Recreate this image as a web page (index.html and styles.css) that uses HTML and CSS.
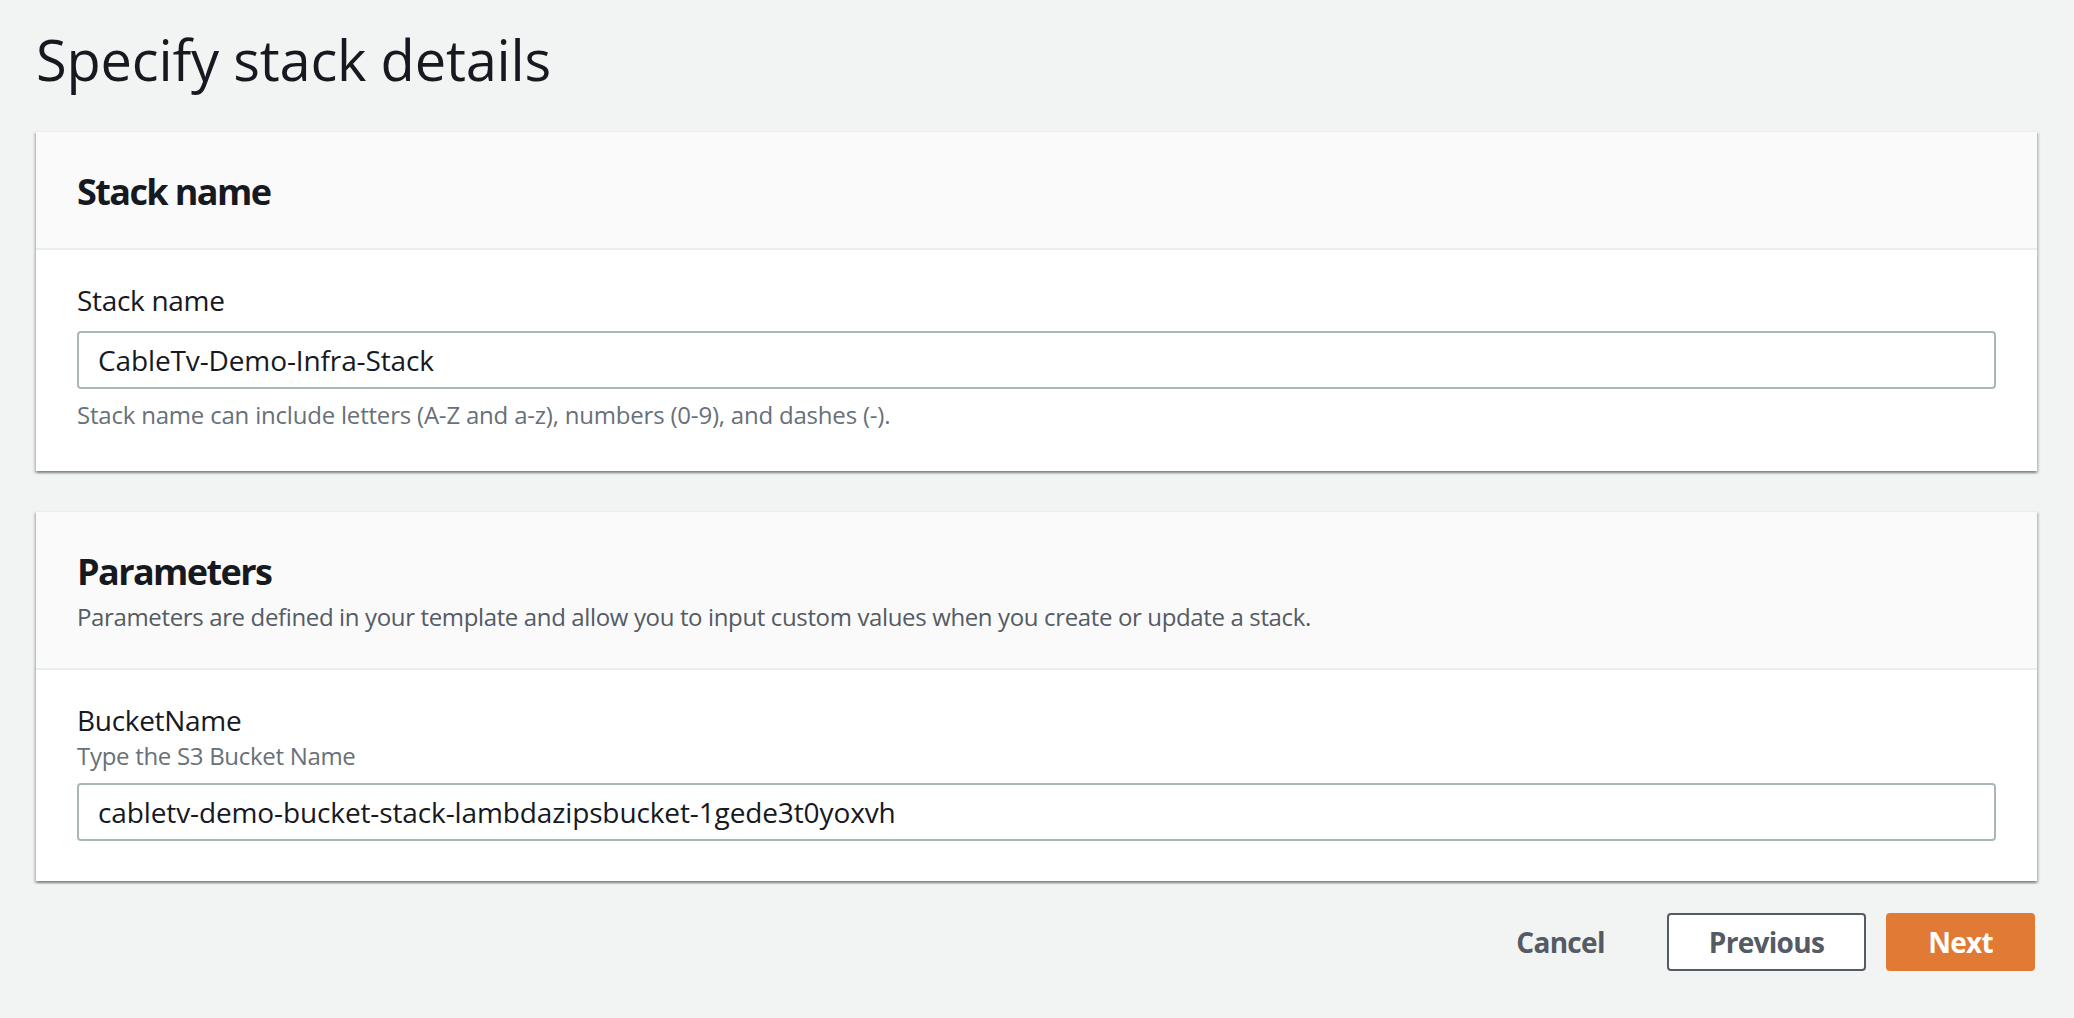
FILE: index.html
```html
<!DOCTYPE html>
<html lang="en">
<head>
<meta charset="utf-8">
<title>Specify stack details</title>
<link rel="stylesheet" href="styles.css">
</head>
<body>
<main class="page">
  <h1 class="page-title">Specify stack details</h1>

  <section class="card">
    <header class="card-header">
      <h2 class="card-title">Stack name</h2>
    </header>
    <div class="card-body">
      <div class="field">
        <label class="field-label" for="stack-name">Stack name</label>
        <input class="field-input" id="stack-name" type="text" value="CableTv-Demo-Infra-Stack">
        <p class="field-hint">Stack name can include letters (A-Z and a-z), numbers (0-9), and dashes (-).</p>
      </div>
    </div>
  </section>

  <section class="card">
    <header class="card-header">
      <h2 class="card-title">Parameters</h2>
      <p class="card-desc">Parameters are defined in your template and allow you to input custom values when you create or update a stack.</p>
    </header>
    <div class="card-body">
      <div class="field">
        <label class="field-label" for="bucket-name">BucketName</label>
        <p class="field-desc">Type the S3 Bucket Name</p>
        <input class="field-input field-input-after-desc" id="bucket-name" type="text" value="cabletv-demo-bucket-stack-lambdazipsbucket-1gede3t0yoxvh">
      </div>
    </div>
  </section>

  <div class="actions">
    <button class="btn btn-link" type="button">Cancel</button>
    <button class="btn btn-normal" type="button">Previous</button>
    <button class="btn btn-primary" type="button">Next</button>
  </div>
</main>
</body>
</html>
```

FILE: styles.css
```css
* {
  box-sizing: border-box;
}

html, body {
  margin: 0;
  padding: 0;
  background: #f2f3f3;
}

body {
  font-family: "Open Sans", "Noto Sans", "Liberation Sans", sans-serif;
  color: #16191f;
  -webkit-font-smoothing: antialiased;
}

.page {
  padding: 23px 37px 0 36px;
}

.page-title {
  margin: 0 0 36px;
  font-size: 56px;
  line-height: 72px;
  font-weight: 400;
  letter-spacing: -0.2px;
  color: #16191f;
}

.card {
  background: #ffffff;
  border-top: 1px solid #eaeded;
  box-shadow: 0 2px 2px 0 rgba(0, 28, 36, 0.3),
              2px 2px 2px 0 rgba(0, 28, 36, 0.15),
              -2px 2px 2px 0 rgba(0, 28, 36, 0.15);
  margin-bottom: 40px;
}

.card-header {
  background: #fafafa;
  border-bottom: 2px solid #eaeded;
  padding: 38px 41px 34px 41px;
}

.card-title {
  margin: 0;
  font-size: 36px;
  line-height: 44px;
  font-weight: 700;
  letter-spacing: -1.6px;
  color: #16191f;
}

.card-desc {
  margin: 7px 0 1px;
  font-size: 24px;
  line-height: 32px;
  letter-spacing: -0.36px;
  color: #545b64;
}

.card-body {
  padding: 30px 41px 40px 41px;
}

.field {
  display: flex;
  flex-direction: column;
}

.field-label {
  font-size: 28px;
  line-height: 40px;
  letter-spacing: -0.3px;
  color: #16191f;
}

.field-desc {
  margin: 0;
  font-size: 24px;
  line-height: 32px;
  letter-spacing: -0.3px;
  color: #687078;
}

.field-input {
  margin-top: 11px;
  height: 58px;
  width: 100%;
  padding: 0 19px;
  border: 2px solid #aab7b8;
  border-radius: 4px;
  background: #ffffff;
  font-family: inherit;
  font-size: 28px;
  letter-spacing: -0.12px;
  color: #16191f;
  outline: none;
}

.field-input-after-desc {
  margin-top: 11px;
}

.field-hint {
  margin: 10px 0 0;
  font-size: 24px;
  line-height: 32px;
  letter-spacing: -0.2px;
  color: #687078;
}

.actions {
  display: flex;
  justify-content: flex-end;
  align-items: center;
  gap: 20px;
  margin-top: -8px;
  margin-right: 2px;
}

.btn {
  height: 58px;
  padding: 0 40px;
  border: 2px solid transparent;
  border-radius: 4px;
  background: transparent;
  font-family: inherit;
  font-size: 28px;
  font-weight: 700;
  line-height: 40px;
  letter-spacing: -0.7px;
  color: #545b64;
  cursor: pointer;
}

.btn-normal {
  background: #ffffff;
  border-color: #545b64;
}

.btn-primary {
  background: #e07a35;
  border-color: #e07a35;
  color: #ffffff;
}
```
